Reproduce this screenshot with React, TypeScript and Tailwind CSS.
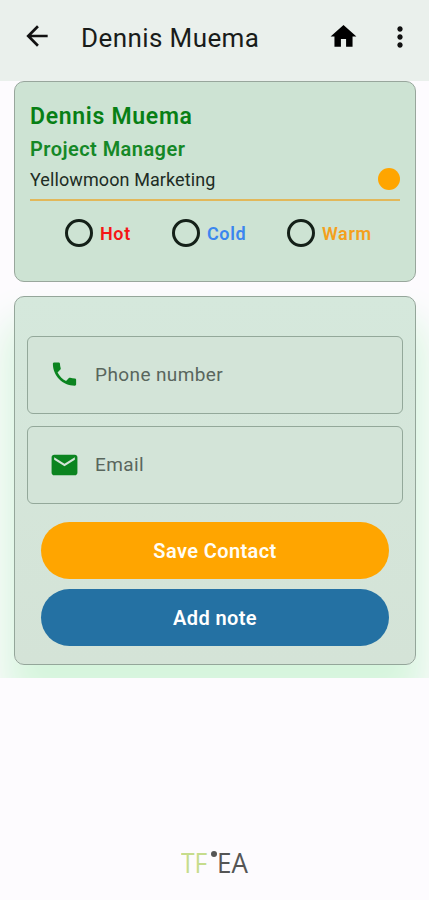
import type { ReactNode } from "react";

function Choice({ label, color, className }: { label: string; color: string; className: string }) {
  return (
    <label className={`flex items-center ${className}`}>
      <span className="h-[28px] w-[28px] shrink-0 rounded-full border-3 border-[#142018]" />
      <span className={`mt-[2px] ml-[7px] text-[18px] leading-[24px] font-semibold tracking-[0.6px] ${color}`}>{label}</span>
    </label>
  );
}

function Field({ icon, label }: { icon: ReactNode; label: string }) {
  return (
    <div className="flex h-[78px] items-center rounded-[6px] border border-[#93a89a] bg-[#d3e4d8] pl-[22px]">
      {icon}
      <span className="ml-[15px] text-[19px] leading-[24px] tracking-[0.4px] text-[#59665d]">{label}</span>
    </div>
  );
}

export default function App() {
  return (
    <div className="flex h-[900px] w-[429px] flex-col overflow-hidden bg-[#fdfbfe] font-['Roboto',sans-serif] whitespace-nowrap">
      <header className="flex h-[81px] shrink-0 items-center bg-[#eaf0ec] pb-[7px] pl-[21px]">
        <svg className="mb-[2px] h-[32px] w-[32px]" viewBox="0 0 24 24" fill="#111">
          <path d="M20 11H7.83l5.59-5.59L12 4l-8 8 8 8 1.41-1.41L7.83 13H20v-2z" />
        </svg>
        <h1 className="mt-[2px] ml-[28px] w-[246px] text-[26px] leading-[34px] tracking-[0.4px] text-[#191c1a]">Dennis Muema</h1>
        <svg className="mb-[2px] ml-[1px] h-[31px] w-[31px]" viewBox="0 0 24 24" fill="#000">
          <path d="M10 20v-6h4v6h5v-8h3L12 3 2 12h3v8z" />
        </svg>
        <svg className="ml-[25px] h-[32px] w-[32px]" viewBox="0 0 24 24" fill="#111">
          <path d="M12 8c1.1 0 2-.9 2-2s-.9-2-2-2-2 .9-2 2 .9 2 2 2zm0 2c-1.1 0-2 .9-2 2s.9 2 2 2 2-.9 2-2-.9-2-2-2zm0 6c-1.1 0-2 .9-2 2s.9 2 2 2 2-.9 2-2-.9-2-2-2z" />
        </svg>
      </header>
      <main className="h-[597px] shrink-0 overflow-hidden pr-[13px] pl-[14px]">
        <section className="h-[201px] rounded-[10px] border border-[#98a69c] bg-[#cde3d3] px-[15px] pt-[18px]">
          <h2 className="text-[23px] leading-[33px] font-semibold tracking-[0.7px] text-[#087f15]">Dennis Muema</h2>
          <p className="text-[20px] leading-[33px] font-semibold tracking-[0.45px] text-[#158827]">Project Manager</p>
          <div className="flex h-[35px] items-center justify-between border-b-2 border-b-[#e2b85a] pb-[6px]">
            <span className="text-[18px] leading-[24px] tracking-[0.1px] text-[#202c24]">Yellowmoon Marketing</span>
            <span className="mb-px h-[22px] w-[22px] rounded-full bg-[#ffa500]" />
          </div>
          <div className="mt-[18px] flex pl-[35px]">
            <Choice label="Hot" color="text-[#f51616]" className="w-[107px]" />
            <Choice label="Cold" color="text-[#3b86ef]" className="w-[115px]" />
            <Choice label="Warm" color="text-[#f4a01c]" className="" />
          </div>
        </section>
        <section className="mt-[14px] flex h-[369px] flex-col rounded-[10px] border border-[#94a69a] bg-linear-to-b from-[#d5e8dc] to-[#d4e3d7] px-[12px] pt-[39px] shadow-[0_34px_40px_8px_#d6f5dd]">
          <Field
            label="Phone number"
            icon={
              <svg className="mb-[2px] -ml-px h-[32px] w-[31px]" viewBox="0 0 24 24" fill="#0b8420">
                <path d="M6.62 10.79c1.44 2.83 3.76 5.14 6.59 6.59l2.2-2.2c.27-.27.67-.36 1.02-.24 1.12.37 2.33.57 3.57.57.55 0 1 .45 1 1V20c0 .55-.45 1-1 1-9.39 0-17-7.61-17-17 0-.55.45-1 1-1h3.5c.55 0 1 .45 1 1 0 1.25.2 2.45.57 3.57.11.35.03.74-.25 1.02l-2.2 2.2z" />
              </svg>
            }
          />
          <div className="h-[12px]" />
          <Field
            label="Email"
            icon={
              <svg className="-ml-px h-[32px] w-[31px]" viewBox="0 0 24 24" fill="#0b8420">
                <path d="M20 4H4c-1.1 0-1.99.9-1.99 2L2 18c0 1.1.9 2 2 2h16c1.1 0 2-.9 2-2V6c0-1.1-.9-2-2-2zm0 4l-8 5-8-5V6l8 5 8-5v2z" />
              </svg>
            }
          />
          <button className="mx-[14px] mt-[18px] h-[57px] rounded-full bg-[#ffa500] text-[20px] font-semibold tracking-[0.4px] text-[#fffdf5]">Save Contact</button>
          <button className="mx-[14px] mt-[10px] h-[57px] rounded-full bg-[#2471a3] text-[20px] font-semibold tracking-[0.4px] text-white">Add note</button>
        </section>
      </main>
      <footer className="mt-[168px] flex h-[32px] pl-[181px] font-['Open_Sans','Noto_Sans',sans-serif] text-[28px] leading-[32px]">
        <span className="w-[30px] origin-left scale-x-[0.88] text-[#c6dc8c]">TF</span>
        <span className="mt-[5px] h-[6px] w-[6px] rounded-full bg-[#555]" />
        <span className="origin-left scale-x-[0.93] text-[#555]">EA</span>
      </footer>
    </div>
  );
}
